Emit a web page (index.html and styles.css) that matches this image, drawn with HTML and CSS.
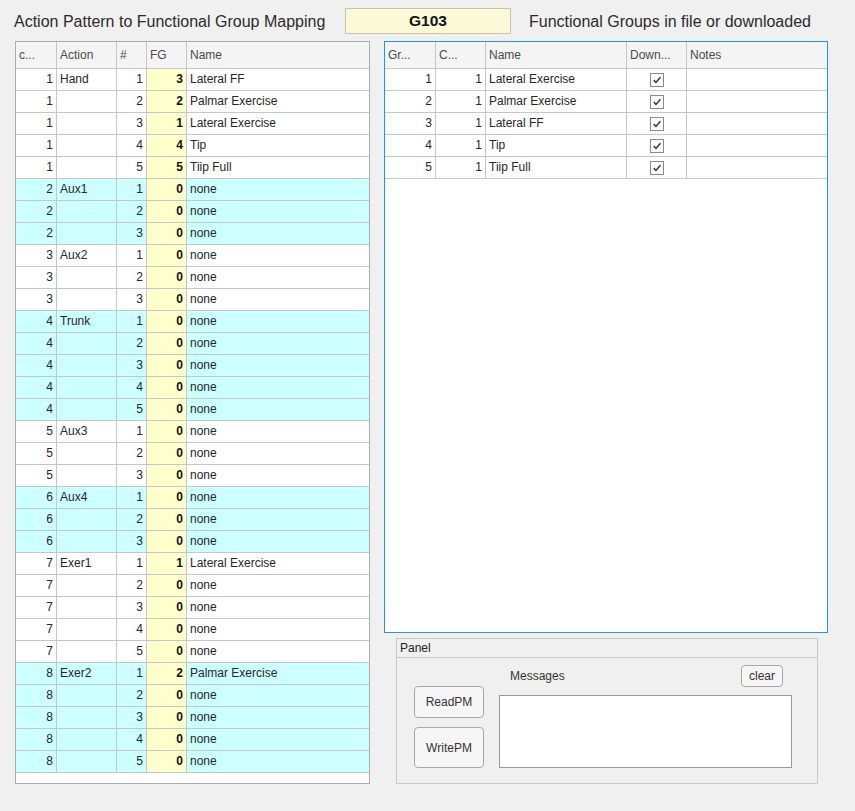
FILE: index.html
```html
<!DOCTYPE html>
<html>
<head>
<meta charset="utf-8">
<link rel="stylesheet" href="styles.css">
</head>
<body>
<div class="app">
  <div class="top">
    <div class="title">Action Pattern to Functional Group Mapping</div>
    <div class="code">G103</div>
    <div class="title title2">Functional Groups in file or downloaded</div>
  </div>
  <div class="main">
    <div class="ltable">
      <div class="lrow hdr"><div class="c">c...</div><div class="c">Action</div><div class="c">#</div><div class="c">FG</div><div class="c">Name</div></div>
      <div class="lrow"><div class="c n">1</div><div class="c">Hand</div><div class="c n">1</div><div class="c n fg">3</div><div class="c">Lateral FF</div></div>
      <div class="lrow"><div class="c n">1</div><div class="c"></div><div class="c n">2</div><div class="c n fg">2</div><div class="c">Palmar Exercise</div></div>
      <div class="lrow"><div class="c n">1</div><div class="c"></div><div class="c n">3</div><div class="c n fg">1</div><div class="c">Lateral Exercise</div></div>
      <div class="lrow"><div class="c n">1</div><div class="c"></div><div class="c n">4</div><div class="c n fg">4</div><div class="c">Tip</div></div>
      <div class="lrow"><div class="c n">1</div><div class="c"></div><div class="c n">5</div><div class="c n fg">5</div><div class="c">Tiip Full</div></div>
      <div class="lrow cy"><div class="c n">2</div><div class="c">Aux1</div><div class="c n">1</div><div class="c n fg">0</div><div class="c">none</div></div>
      <div class="lrow cy"><div class="c n">2</div><div class="c"></div><div class="c n">2</div><div class="c n fg">0</div><div class="c">none</div></div>
      <div class="lrow cy"><div class="c n">2</div><div class="c"></div><div class="c n">3</div><div class="c n fg">0</div><div class="c">none</div></div>
      <div class="lrow"><div class="c n">3</div><div class="c">Aux2</div><div class="c n">1</div><div class="c n fg">0</div><div class="c">none</div></div>
      <div class="lrow"><div class="c n">3</div><div class="c"></div><div class="c n">2</div><div class="c n fg">0</div><div class="c">none</div></div>
      <div class="lrow"><div class="c n">3</div><div class="c"></div><div class="c n">3</div><div class="c n fg">0</div><div class="c">none</div></div>
      <div class="lrow cy"><div class="c n">4</div><div class="c">Trunk</div><div class="c n">1</div><div class="c n fg">0</div><div class="c">none</div></div>
      <div class="lrow cy"><div class="c n">4</div><div class="c"></div><div class="c n">2</div><div class="c n fg">0</div><div class="c">none</div></div>
      <div class="lrow cy"><div class="c n">4</div><div class="c"></div><div class="c n">3</div><div class="c n fg">0</div><div class="c">none</div></div>
      <div class="lrow cy"><div class="c n">4</div><div class="c"></div><div class="c n">4</div><div class="c n fg">0</div><div class="c">none</div></div>
      <div class="lrow cy"><div class="c n">4</div><div class="c"></div><div class="c n">5</div><div class="c n fg">0</div><div class="c">none</div></div>
      <div class="lrow"><div class="c n">5</div><div class="c">Aux3</div><div class="c n">1</div><div class="c n fg">0</div><div class="c">none</div></div>
      <div class="lrow"><div class="c n">5</div><div class="c"></div><div class="c n">2</div><div class="c n fg">0</div><div class="c">none</div></div>
      <div class="lrow"><div class="c n">5</div><div class="c"></div><div class="c n">3</div><div class="c n fg">0</div><div class="c">none</div></div>
      <div class="lrow cy"><div class="c n">6</div><div class="c">Aux4</div><div class="c n">1</div><div class="c n fg">0</div><div class="c">none</div></div>
      <div class="lrow cy"><div class="c n">6</div><div class="c"></div><div class="c n">2</div><div class="c n fg">0</div><div class="c">none</div></div>
      <div class="lrow cy"><div class="c n">6</div><div class="c"></div><div class="c n">3</div><div class="c n fg">0</div><div class="c">none</div></div>
      <div class="lrow"><div class="c n">7</div><div class="c">Exer1</div><div class="c n">1</div><div class="c n fg">1</div><div class="c">Lateral Exercise</div></div>
      <div class="lrow"><div class="c n">7</div><div class="c"></div><div class="c n">2</div><div class="c n fg">0</div><div class="c">none</div></div>
      <div class="lrow"><div class="c n">7</div><div class="c"></div><div class="c n">3</div><div class="c n fg">0</div><div class="c">none</div></div>
      <div class="lrow"><div class="c n">7</div><div class="c"></div><div class="c n">4</div><div class="c n fg">0</div><div class="c">none</div></div>
      <div class="lrow"><div class="c n">7</div><div class="c"></div><div class="c n">5</div><div class="c n fg">0</div><div class="c">none</div></div>
      <div class="lrow cy"><div class="c n">8</div><div class="c">Exer2</div><div class="c n">1</div><div class="c n fg">2</div><div class="c">Palmar Exercise</div></div>
      <div class="lrow cy"><div class="c n">8</div><div class="c"></div><div class="c n">2</div><div class="c n fg">0</div><div class="c">none</div></div>
      <div class="lrow cy"><div class="c n">8</div><div class="c"></div><div class="c n">3</div><div class="c n fg">0</div><div class="c">none</div></div>
      <div class="lrow cy"><div class="c n">8</div><div class="c"></div><div class="c n">4</div><div class="c n fg">0</div><div class="c">none</div></div>
      <div class="lrow cy"><div class="c n">8</div><div class="c"></div><div class="c n">5</div><div class="c n fg">0</div><div class="c">none</div></div>
    </div>
    <div class="rcol">
      <div class="rtable">
        <div class="rrow hdr"><div class="c">Gr...</div><div class="c">C...</div><div class="c">Name</div><div class="c">Down...</div><div class="c">Notes</div></div>
        <div class="rrow"><div class="c n">1</div><div class="c n">1</div><div class="c">Lateral Exercise</div><div class="c ck"><span class="box"><svg viewBox="0 0 13 13" width="13" height="13"><path d="M3 6.6 L5.4 9.2 L10.2 3.6" fill="none" stroke="#333" stroke-width="1.6"/></svg></span></div><div class="c"></div></div>
        <div class="rrow"><div class="c n">2</div><div class="c n">1</div><div class="c">Palmar Exercise</div><div class="c ck"><span class="box"><svg viewBox="0 0 13 13" width="13" height="13"><path d="M3 6.6 L5.4 9.2 L10.2 3.6" fill="none" stroke="#333" stroke-width="1.6"/></svg></span></div><div class="c"></div></div>
        <div class="rrow"><div class="c n">3</div><div class="c n">1</div><div class="c">Lateral FF</div><div class="c ck"><span class="box"><svg viewBox="0 0 13 13" width="13" height="13"><path d="M3 6.6 L5.4 9.2 L10.2 3.6" fill="none" stroke="#333" stroke-width="1.6"/></svg></span></div><div class="c"></div></div>
        <div class="rrow"><div class="c n">4</div><div class="c n">1</div><div class="c">Tip</div><div class="c ck"><span class="box"><svg viewBox="0 0 13 13" width="13" height="13"><path d="M3 6.6 L5.4 9.2 L10.2 3.6" fill="none" stroke="#333" stroke-width="1.6"/></svg></span></div><div class="c"></div></div>
        <div class="rrow"><div class="c n">5</div><div class="c n">1</div><div class="c">Tiip Full</div><div class="c ck"><span class="box"><svg viewBox="0 0 13 13" width="13" height="13"><path d="M3 6.6 L5.4 9.2 L10.2 3.6" fill="none" stroke="#333" stroke-width="1.6"/></svg></span></div><div class="c"></div></div>
      </div>
      <div class="panel">
        <div class="ptitle">Panel</div>
        <div class="pbody">
          <div class="btns">
            <div class="btn read">ReadPM</div>
            <div class="btn write">WritePM</div>
          </div>
          <div class="msgs">
            <div class="mhead">
              <span class="mlabel">Messages</span>
              <div class="btn clear">clear</div>
            </div>
            <div class="mbox"></div>
          </div>
        </div>
      </div>
    </div>
  </div>
</div>
</body>
</html>
```
FILE: styles.css
```css
html, body {
  margin: 0;
  padding: 0;
  background: #f0f0f0;
}
body {
  font-family: "Liberation Sans", Arial, sans-serif;
  font-size: 12px;
  color: #262626;
  width: 855px;
  height: 811px;
  overflow: hidden;
}
.app {
  padding-left: 15px;
}
.top {
  display: flex;
  align-items: flex-start;
  height: 41px;
}
.title {
  font-size: 16px;
  color: #2b2b2b;
  line-height: 20px;
  margin-top: 12px;
  margin-left: -1px;
  width: 331px;
  white-space: nowrap;
}
.title2 {
  margin-left: 18px;
  width: auto;
}
.code {
  box-sizing: border-box;
  margin-top: 8px;
  width: 166px;
  height: 26px;
  background: #fafad7;
  border: 1px solid #c3c3b0;
  font-weight: bold;
  font-size: 15.5px;
  text-align: center;
  line-height: 23px;
  color: #111;
}
.main {
  display: flex;
  align-items: flex-start;
}
.ltable {
  box-sizing: border-box;
  width: 355px;
  height: 743px;
  border: 1px solid #acacac;
  background: #fff;
}
.lrow, .rrow {
  display: grid;
  height: 22px;
}
.lrow {
  grid-template-columns: 41px 60px 30px 40px 182px;
}
.rrow {
  grid-template-columns: 51px 50px 141px 60px 140px;
}
.c {
  box-sizing: border-box;
  border-right: 1px solid #c6c6c6;
  border-bottom: 1px solid #c6c6c6;
  padding: 0 3px;
  line-height: 21px;
  white-space: nowrap;
  overflow: hidden;
}
.c:last-child {
  border-right: none;
}
.hdr {
  height: 27px;
}
.hdr .c {
  background: #f4f4f4;
  color: #4a4a4a;
  line-height: 26px;
}
.n {
  text-align: right;
}
.lrow.cy .c {
  background: #ccffff;
}
.lrow .c.fg {
  background: #ffffcc;
  font-weight: bold;
  color: #111;
}
.rcol {
  margin-left: 14px;
  display: flex;
  flex-direction: column;
}
.rtable {
  box-sizing: border-box;
  width: 444px;
  height: 592px;
  border: 1px solid #1e96f0;
  background: #fff;
}
.ck {
  display: flex;
  align-items: center;
  justify-content: center;
}
.box {
  box-sizing: border-box;
  width: 14px;
  height: 14px;
  border: 1px solid #8a8a8a;
  background: #fff;
  display: flex;
  align-items: center;
  justify-content: center;
}
.box svg {
  display: block;
  width: 12px;
  height: 12px;
}
.panel {
  box-sizing: border-box;
  margin-top: 5px;
  margin-left: 12px;
  width: 422px;
  height: 146px;
  border: 1px solid #c8c8c8;
}
.ptitle {
  height: 18px;
  line-height: 18px;
  padding-left: 3px;
  border-bottom: 1px solid #c8c8c8;
  color: #222;
}
.pbody {
  display: flex;
  align-items: flex-start;
  padding-left: 17px;
}
.btns {
  display: flex;
  flex-direction: column;
  gap: 9px;
  margin-top: 28px;
}
.btn {
  box-sizing: border-box;
  border: 1px solid #a8a8a8;
  border-radius: 4px;
  background: #f6f6f6;
  color: #333;
  display: flex;
  align-items: center;
  justify-content: center;
}
.read {
  width: 70px;
  height: 32px;
}
.write {
  width: 70px;
  height: 41px;
}
.msgs {
  margin-left: 15px;
  margin-top: 7px;
  width: 293px;
}
.mhead {
  display: flex;
  align-items: center;
  justify-content: space-between;
  height: 22px;
  padding-left: 11px;
  padding-right: 9px;
}
.mlabel {
  color: #333;
}
.clear {
  width: 42px;
  height: 22px;
}
.mbox {
  box-sizing: border-box;
  margin-top: 8px;
  width: 293px;
  height: 73px;
  background: #fff;
  border: 1px solid #9a9a9a;
}
```
